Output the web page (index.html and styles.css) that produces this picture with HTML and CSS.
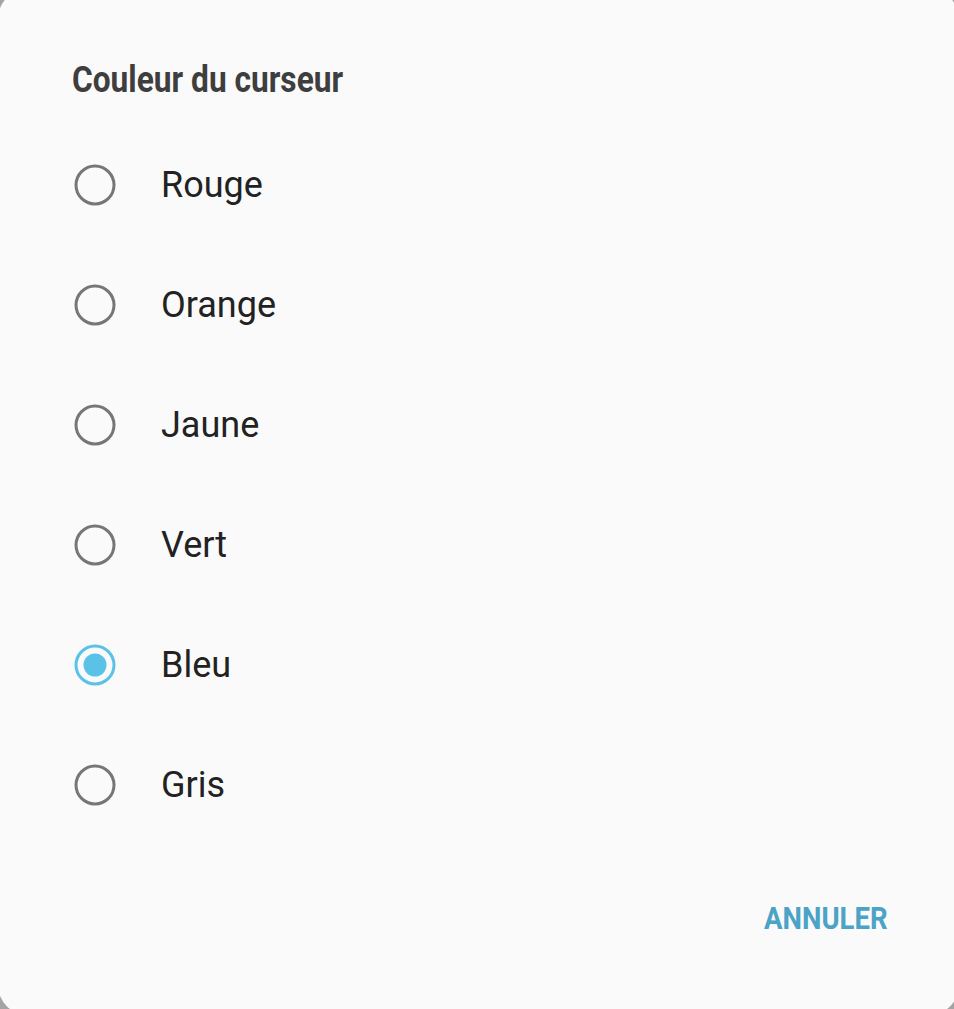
FILE: index.html
```html
<!DOCTYPE html>
<html lang="fr">
<head>
<meta charset="utf-8">
<title>Couleur du curseur</title>
<link rel="stylesheet" href="styles.css">
</head>
<body>
<div class="dialog">
  <h1 class="title"><span class="cond">Couleur du curseur</span></h1>
  <ul class="options">
    <li class="option"><svg class="radio" viewBox="0 0 44 44"><circle cx="22" cy="22" r="19" class="ring"/></svg><span class="label">Rouge</span></li>
    <li class="option"><svg class="radio" viewBox="0 0 44 44"><circle cx="22" cy="22" r="19" class="ring"/></svg><span class="label">Orange</span></li>
    <li class="option"><svg class="radio" viewBox="0 0 44 44"><circle cx="22" cy="22" r="19" class="ring"/></svg><span class="label">Jaune</span></li>
    <li class="option"><svg class="radio" viewBox="0 0 44 44"><circle cx="22" cy="22" r="19" class="ring"/></svg><span class="label">Vert</span></li>
    <li class="option selected"><svg class="radio" viewBox="0 0 44 44"><circle cx="22" cy="22" r="19" class="ring"/><circle cx="22" cy="22" r="11.5" class="dot"/></svg><span class="label">Bleu</span></li>
    <li class="option"><svg class="radio" viewBox="0 0 44 44"><circle cx="22" cy="22" r="19" class="ring"/></svg><span class="label">Gris</span></li>
  </ul>
  <div class="actions">
    <button class="btn"><span class="cond-r">ANNULER</span></button>
  </div>
</div>
</body>
</html>
```

FILE: styles.css
```css
html, body {
  margin: 0;
  padding: 0;
  height: 100%;
  overflow: hidden;
  background: #a4a4a4;
}

.dialog {
  box-sizing: border-box;
  margin: -11px 0 0 -2px;
  width: 961px;
  height: 1026px;
  border-radius: 30px;
  background: #fafafa;
  padding: 73px 0 0 74px;
  font-family: Roboto, "Liberation Sans", sans-serif;
  display: flex;
  flex-direction: column;
}

.title {
  margin: 0;
  font-size: 36px;
  line-height: 36px;
  font-weight: 700;
  color: #3e3e3e;
  white-space: nowrap;
}

.cond {
  display: inline-block;
  transform: scaleX(0.88);
  transform-origin: left center;
}

.options {
  list-style: none;
  margin: 27px 0 0 0;
  padding: 0;
}

.option {
  height: 120px;
  display: flex;
  align-items: center;
}

.radio {
  width: 44px;
  height: 44px;
  margin-left: 1px;
  flex: none;
}

.ring {
  fill: none;
  stroke: #767676;
  stroke-width: 3;
}

.selected .ring {
  stroke: #5bc2e7;
}

.dot {
  fill: #5bc2e7;
}

.label {
  margin-left: 44px;
  font-size: 36px;
  line-height: 40px;
  color: #222222;
}

.actions {
  display: flex;
  justify-content: flex-end;
  padding-right: 71px;
  margin-top: 57px;
}

.btn {
  border: 0;
  background: none;
  padding: 0;
  font-family: Roboto, "Liberation Sans", sans-serif;
  font-size: 32px;
  line-height: 32px;
  font-weight: 700;
  color: #4ba3c5;
  white-space: nowrap;
}

.cond-r {
  display: inline-block;
  transform: scaleX(0.86);
  transform-origin: right center;
}
```
